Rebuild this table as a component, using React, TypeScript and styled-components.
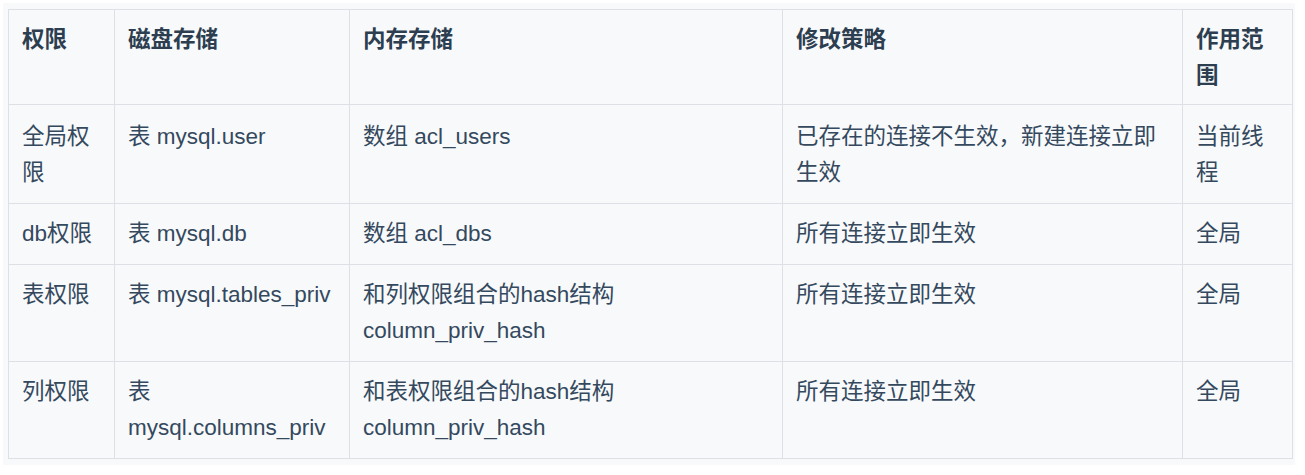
import React from "react";
import styled, { createGlobalStyle } from "styled-components";

const Global = createGlobalStyle`
  html, body { margin: 0; padding: 0; background: #ffffff; }
  body { font-family: "Liberation Sans", "Noto Sans CJK SC", sans-serif; }
`;

const Page = styled.div`
  padding: 3px 10px 0 3px;
`;

const Box = styled.div`
  width: 1292px;
  box-sizing: border-box;
  background: #f8f9fb;
  padding: 6px 3px 6px 5px;
`;

const Table = styled.table`
  width: 1284px;
  table-layout: fixed;
  border-collapse: collapse;
  font-family: "Liberation Sans", "Noto Sans CJK SC", sans-serif;
  font-size: 22.5px;
  line-height: 36px;
  color: #34495e;
`;

const Th = styled.th`
  border: 1px solid #dde0e4;
  padding: 12px 13px 10px;
  text-align: left;
  vertical-align: top;
  font-weight: 700;
  color: #2c3e50;
`;

const Td = styled.td<{ $first?: boolean }>`
  border: 1px solid #dde0e4;
  padding: ${(p) => (p.$first ? "14px 13px 12px" : "12px 13px")};
  text-align: left;
  vertical-align: top;
  font-weight: 400;
`;

const columns = [106, 235, 433, 400, 110];
const headers = ["权限", "磁盘存储", "内存存储", "修改策略", "作用范围"];
const rows: string[][] = [
  ["全局权限", "表 mysql.user", "数组 acl_users", "已存在的连接不生效，新建连接立即生效", "当前线程"],
  ["db权限", "表 mysql.db", "数组 acl_dbs", "所有连接立即生效", "全局"],
  ["表权限", "表 mysql.tables_priv", "和列权限组合的hash结构 column_priv_hash", "所有连接立即生效", "全局"],
  ["列权限", "表 mysql.columns_priv", "和表权限组合的hash结构 column_priv_hash", "所有连接立即生效", "全局"],
];

export default function App() {
  return (
    <>
      <Global />
      <Page>
        <Box>
          <Table>
            <colgroup>
              {columns.map((w, i) => (
                <col key={i} style={{ width: w }} />
              ))}
            </colgroup>
            <thead>
              <tr>
                {headers.map((h) => (
                  <Th key={h}>{h}</Th>
                ))}
              </tr>
            </thead>
            <tbody>
              {rows.map((r, i) => (
                <tr key={i}>
                  {r.map((c, j) => (
                    <Td key={j} $first={i === 0}>
                      {c}
                    </Td>
                  ))}
                </tr>
              ))}
            </tbody>
          </Table>
        </Box>
      </Page>
    </>
  );
}
